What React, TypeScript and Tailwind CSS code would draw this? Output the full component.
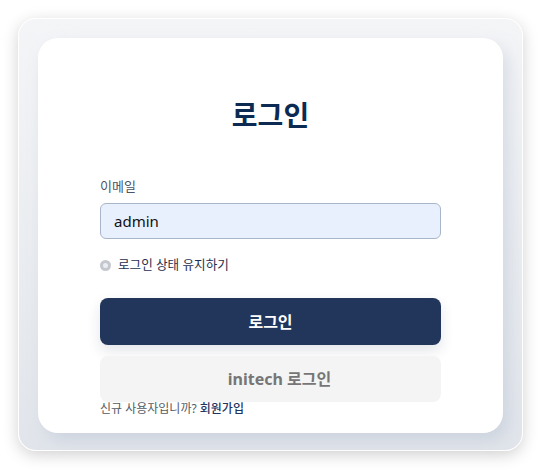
import { useState } from "react";

const font = { fontFamily: '"Noto Sans", "Noto Sans CJK KR", sans-serif' };

const App = () => {
    const [email, setEmail] = useState("admin");
    const [keep, setKeep] = useState(false);

    return (
        <div className="w-[542px] h-[470px] bg-white p-[18px] pr-[19px]" style={font}>
            {/* outer panel */}
            <div className="h-[433px] rounded-[18px] bg-gradient-to-b from-[#f4f5f7] to-[#e1e5eb] p-[19px] shadow-[0_4px_16px_rgba(0,0,0,0.18)] border border-white">
                {/* card */}
                <div className="h-[395px] rounded-[20px] bg-white px-[62px] pt-[59px] shadow-[6px_8px_16px_rgba(170,180,200,0.35)]">
                    <h1 className="text-center text-[28px] leading-[36px] font-bold text-[#0d2a52]">로그인</h1>

                    <label className="block mt-[44px] text-[13px] leading-[18px] text-[#4b5563]">이메일</label>
                    <input
                        value={email}
                        onChange={(e) => setEmail(e.target.value)}
                        className="mt-[8px] w-full h-[36px] rounded-[6px] border border-[#a9b6ca] bg-[#e8f0fe] px-[13px] text-[15px] text-[#111] outline-none"
                    />

                    <label className="mt-[17px] flex items-center gap-[7px] h-[18px] cursor-pointer" onClick={() => setKeep(!keep)}>
                        <span className="w-[11px] h-[11px] rounded-full bg-[#c5c8cf] flex items-center justify-center">
                            <span className={keep ? "w-[5px] h-[5px] rounded-full bg-[#22355a]" : "w-[5px] h-[5px] rounded-full bg-[#eceef2]"} />
                        </span>
                        <span className="text-[12.6px] leading-[18px] text-[#1f2f4f]">로그인 상태 유지하기</span>
                    </label>

                    <button className="mt-[24px] w-full h-[47px] rounded-[8px] bg-[#22355a] text-white text-[16px] font-bold shadow-[0_6px_14px_rgba(30,45,80,0.12)]">
                        로그인
                    </button>
                    {/* text sits a bit right of center in the original */}
                    <button className="mt-[11px] w-full h-[46px] rounded-[8px] bg-[#f4f4f4] pl-[18px] text-[#767676] text-[16px] font-bold">
                        initech 로그인
                    </button>

                    <p className="text-[12px] leading-[14px] text-[#555b63]">
                        신규 사용자입니까? <a href="#" className="text-[#1f3560] font-medium">회원가입</a>
                    </p>
                </div>
            </div>
        </div>
    );
};

export default App;
